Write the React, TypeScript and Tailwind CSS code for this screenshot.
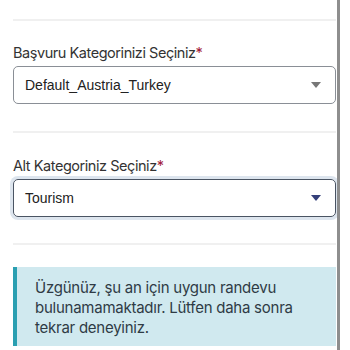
import React from 'react'

function Caret({ className }: { className: string }) {
  return (
    <svg width="10" height="6" viewBox="0 0 10 6" className={className}>
      <path d="M0 0h10L5 6z" fill="currentColor" />
    </svg>
  )
}

function SelectField({
  label,
  value,
  focused,
}: {
  label: string
  value: string
  focused?: boolean
}) {
  return (
    <div>
      <div className="text-[14.5px] leading-[20px] tracking-[-0.45px] text-[#333] font-['Inter',sans-serif]">
        {label}
        <span className="text-[#a3223b]">*</span>
      </div>
      <div
        className={`mt-[3px] h-[38px] rounded-[5px] border flex items-center pl-[11px] pr-[14px] font-['Liberation_Sans',Arial,sans-serif] text-[14px] text-[#222] ${
          focused
            ? 'border-[#4a5463] shadow-[0_0_0_3px_#dde5ee]'
            : 'border-[#8a8f96]'
        }`}
      >
        <span className="flex-1">{value}</span>
        <Caret className={focused ? 'text-[#35407a]' : 'text-[#777]'} />
      </div>
    </div>
  )
}

export default function App() {
  return (
    <div className="w-[350px] h-[350px] bg-white flex overflow-hidden">
      <div className="w-[337px] pl-[13px] pr-[1px] pt-[19px] flex flex-col">
        <div className="h-[2px] bg-[#f0f0f0]" />
        <div className="mt-[22px]">
          <SelectField label="Başvuru Kategorinizi Seçiniz" value="Default_Austria_Turkey" />
        </div>
        <div className="mt-[27px] h-[2px] bg-[#f0f0f0]" />
        <div className="mt-[23px]">
          <SelectField label="Alt Kategoriniz Seçiniz" value="Tourism" focused />
        </div>
        <div className="mt-[26px] h-[2px] bg-[#f0f0f0]" />
        <div className="mt-[22px] bg-[#d0e9ef] border-l-[4px] border-[#2a9fb1] pl-[18px] pr-3 pt-[11px] pb-[8px] font-['Inter',sans-serif] text-[15px] leading-[20px] tracking-[-0.25px] text-[#2f3b45]">
          Üzgünüz, şu an için uygun randevu bulunamamaktadır. Lütfen daha sonra tekrar deneyiniz.
        </div>
      </div>
      <div className="w-[3px] bg-[#8e8e8e]" />
      <div className="flex-1" />
    </div>
  )
}
